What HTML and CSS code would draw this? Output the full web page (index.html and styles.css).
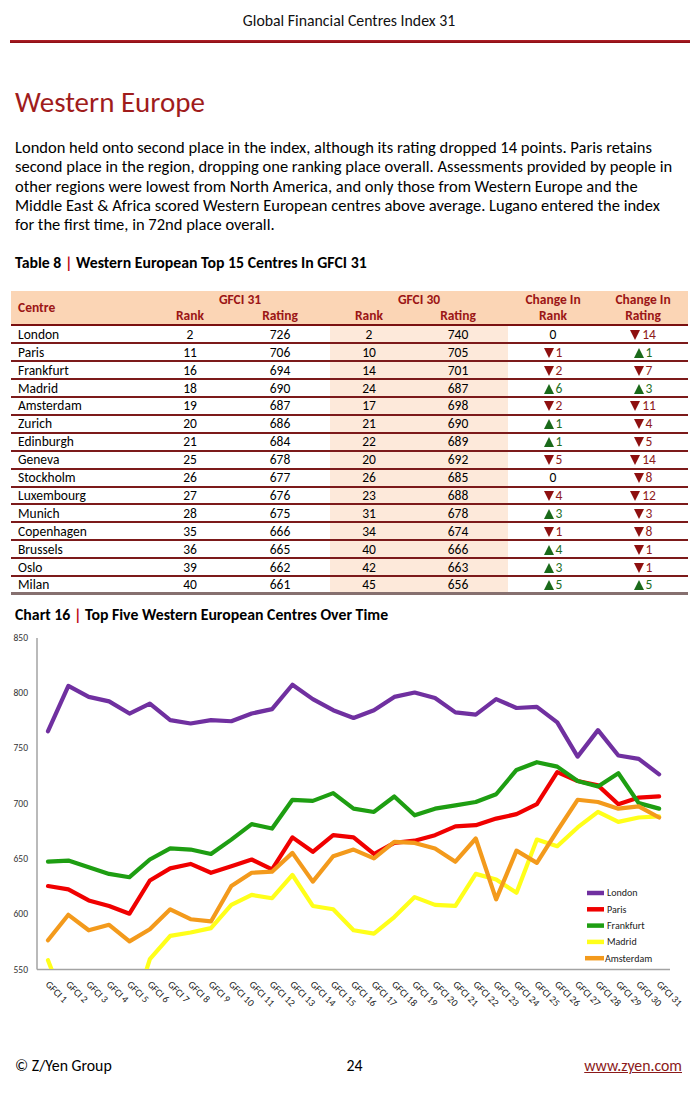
FILE: index.html
```html
<!DOCTYPE html>
<html lang="en">
<head>
<meta charset="utf-8">
<title>GFCI 31 – Western Europe</title>
<link rel="stylesheet" href="styles.css">
</head>
<body>
<div class="page">
  <header class="top">Global Financial Centres Index 31</header>
  <div class="rule"></div>

  <h1 class="title">Western Europe</h1>
  <p class="intro">London held onto second place in the index, although its rating dropped 14 points. Paris retains<br>second place in the region, dropping one ranking place overall. Assessments provided by people in<br>other regions were lowest from North America, and only those from Western Europe and the<br>Middle East &amp; Africa scored Western European centres above average. Lugano entered the index<br>for the first time, in 72nd place overall.</p>

  <h2 class="caption">Table 8 <span class="pipe">|</span> Western European Top 15 Centres In GFCI 31</h2>
  <table class="gfci">
    <colgroup>
      <col class="w-centre"><col class="w-rank"><col class="w-rating"><col class="w-rank30"><col class="w-rating"><col class="w-chg"><col class="w-chg">
    </colgroup>
    <thead>
      <tr class="h1">
        <th rowspan="2" class="left">Centre</th>
        <th colspan="2">GFCI 31</th>
        <th colspan="2">GFCI 30</th>
        <th>Change In</th>
        <th>Change In</th>
      </tr>
      <tr class="h2">
        <th>Rank</th><th>Rating</th><th>Rank</th><th>Rating</th><th>Rank</th><th>Rating</th>
      </tr>
    </thead>
    <tbody>
      <tr><td class="left">London</td><td>2</td><td>726</td><td class="prev">2</td><td class="prev">740</td><td>0</td><td><span class="dn">14</span></td></tr>
      <tr><td class="left">Paris</td><td>11</td><td>706</td><td class="prev">10</td><td class="prev">705</td><td><span class="dn">1</span></td><td><span class="up">1</span></td></tr>
      <tr><td class="left">Frankfurt</td><td>16</td><td>694</td><td class="prev">14</td><td class="prev">701</td><td><span class="dn">2</span></td><td><span class="dn">7</span></td></tr>
      <tr><td class="left">Madrid</td><td>18</td><td>690</td><td class="prev">24</td><td class="prev">687</td><td><span class="up">6</span></td><td><span class="up">3</span></td></tr>
      <tr><td class="left">Amsterdam</td><td>19</td><td>687</td><td class="prev">17</td><td class="prev">698</td><td><span class="dn">2</span></td><td><span class="dn">11</span></td></tr>
      <tr><td class="left">Zurich</td><td>20</td><td>686</td><td class="prev">21</td><td class="prev">690</td><td><span class="up">1</span></td><td><span class="dn">4</span></td></tr>
      <tr><td class="left">Edinburgh</td><td>21</td><td>684</td><td class="prev">22</td><td class="prev">689</td><td><span class="up">1</span></td><td><span class="dn">5</span></td></tr>
      <tr><td class="left">Geneva</td><td>25</td><td>678</td><td class="prev">20</td><td class="prev">692</td><td><span class="dn">5</span></td><td><span class="dn">14</span></td></tr>
      <tr><td class="left">Stockholm</td><td>26</td><td>677</td><td class="prev">26</td><td class="prev">685</td><td>0</td><td><span class="dn">8</span></td></tr>
      <tr><td class="left">Luxembourg</td><td>27</td><td>676</td><td class="prev">23</td><td class="prev">688</td><td><span class="dn">4</span></td><td><span class="dn">12</span></td></tr>
      <tr><td class="left">Munich</td><td>28</td><td>675</td><td class="prev">31</td><td class="prev">678</td><td><span class="up">3</span></td><td><span class="dn">3</span></td></tr>
      <tr><td class="left">Copenhagen</td><td>35</td><td>666</td><td class="prev">34</td><td class="prev">674</td><td><span class="dn">1</span></td><td><span class="dn">8</span></td></tr>
      <tr><td class="left">Brussels</td><td>36</td><td>665</td><td class="prev">40</td><td class="prev">666</td><td><span class="up">4</span></td><td><span class="dn">1</span></td></tr>
      <tr><td class="left">Oslo</td><td>39</td><td>662</td><td class="prev">42</td><td class="prev">663</td><td><span class="up">3</span></td><td><span class="dn">1</span></td></tr>
      <tr class="last"><td class="left">Milan</td><td>40</td><td>661</td><td class="prev">45</td><td class="prev">656</td><td><span class="up">5</span></td><td><span class="up">5</span></td></tr>
    </tbody>
  </table>

  <h2 class="caption chart-cap">Chart 16 <span class="pipe">|</span> Top Five Western European Centres Over Time</h2>
  <div class="chart">
    <svg class="chart-svg" width="690" height="390" viewBox="0 0 690 390" xmlns="http://www.w3.org/2000/svg">
      <defs>
        <clipPath id="plot"><rect x="37" y="0" width="640" height="342"/></clipPath>
      </defs>
      <g class="ylab" text-anchor="end">
        <text x="28" y="13.7">850</text>
        <text x="28" y="69">800</text>
        <text x="28" y="124.3">750</text>
        <text x="28" y="179.6">700</text>
        <text x="28" y="234.9">650</text>
        <text x="28" y="290.2">600</text>
        <text x="28" y="345.5">550</text>
      </g>
      <line x1="37" y1="11" x2="37" y2="342.5" class="axis"/>
      <line x1="37" y1="342.5" x2="670" y2="342.5" class="axis"/>
      <g clip-path="url(#plot)">
        <g transform="translate(48 342) scale(20.37 -1.106)" fill="none" stroke-width="4.2" stroke-linejoin="round" stroke-linecap="round">
          <polyline vector-effect="non-scaling-stroke" stroke="#7030a0" points="0,215 1,256 2,246 3,242 4,231 5,240 6,225 7,222 8,225 9,224 10,231 11,235 12,257 13,244 14,234 15,227 16,234 17,246 18,250 19,245 20,232 21,230 22,244 23,236 24,237 25,223 26,192 27,216 28,193 29,190 30,176"/>
          <polyline vector-effect="non-scaling-stroke" stroke="#f00000" points="0,75 1,72 2,62 3,57 4,50 5,80 6,91 7,95 8,87 9,93 10,99 11,90 12,119 13,106 14,121 15,119 16,104 17,114 18,116 19,121 20,129 21,130 22,136 23,140 24,149 25,178 26,170 27,166 28,149 29,155 30,156"/>
          <polyline vector-effect="non-scaling-stroke" stroke="#1e9e12" points="0,97 1,98 2,92 3,86 4,83 5,99 6,109 7,108 8,104 9,117 10,131 11,127 12,153 13,152 14,159 15,145 16,142 17,156 18,139 19,145 20,148 21,151 22,158 23,180 24,187 25,183 26,170 27,165 28,177 29,150 30,145"/>
          <polyline vector-effect="non-scaling-stroke" stroke="#ffff1a" points="0,8 1,-40 2,-45 3,-42 4,-50 5,9 6,30 7,33 8,37 9,58 10,67 11,64 12,85 13,57 14,54 15,35 16,32 17,47 18,65 19,58 20,57 21,86 22,81 23,69 24,117 25,111 26,128 27,142 28,133 29,137 30,138"/>
          <polyline vector-effect="non-scaling-stroke" stroke="#f39a1c" points="0,26 1,49 2,35 3,40 4,25 5,36 6,54 7,45 8,43 9,75 10,87 11,88 12,105 13,79 14,102 15,108 16,100 17,115 18,114 19,109 20,97 21,118 22,63 23,107 24,96 25,125 26,153 27,151 28,145 29,147 30,137"/>
        </g>
      </g>
      <g class="xlab">
        <text transform="translate(45 358) rotate(45)">GFCI 1</text>
        <text transform="translate(65.4 358) rotate(45)">GFCI 2</text>
        <text transform="translate(85.7 358) rotate(45)">GFCI 3</text>
        <text transform="translate(106.1 358) rotate(45)">GFCI 4</text>
        <text transform="translate(126.5 358) rotate(45)">GFCI 5</text>
        <text transform="translate(146.9 358) rotate(45)">GFCI 6</text>
        <text transform="translate(167.2 358) rotate(45)">GFCI 7</text>
        <text transform="translate(187.6 358) rotate(45)">GFCI 8</text>
        <text transform="translate(208 358) rotate(45)">GFCI 9</text>
        <text transform="translate(228.3 358) rotate(45)">GFCI 10</text>
        <text transform="translate(248.7 358) rotate(45)">GFCI 11</text>
        <text transform="translate(269.1 358) rotate(45)">GFCI 12</text>
        <text transform="translate(289.4 358) rotate(45)">GFCI 13</text>
        <text transform="translate(309.8 358) rotate(45)">GFCI 14</text>
        <text transform="translate(330.2 358) rotate(45)">GFCI 15</text>
        <text transform="translate(350.6 358) rotate(45)">GFCI 16</text>
        <text transform="translate(370.9 358) rotate(45)">GFCI 17</text>
        <text transform="translate(391.3 358) rotate(45)">GFCI 18</text>
        <text transform="translate(411.7 358) rotate(45)">GFCI 19</text>
        <text transform="translate(432 358) rotate(45)">GFCI 20</text>
        <text transform="translate(452.4 358) rotate(45)">GFCI 21</text>
        <text transform="translate(472.8 358) rotate(45)">GFCI 22</text>
        <text transform="translate(493.1 358) rotate(45)">GFCI 23</text>
        <text transform="translate(513.5 358) rotate(45)">GFCI 24</text>
        <text transform="translate(533.9 358) rotate(45)">GFCI 25</text>
        <text transform="translate(554.3 358) rotate(45)">GFCI 26</text>
        <text transform="translate(574.6 358) rotate(45)">GFCI 27</text>
        <text transform="translate(595 358) rotate(45)">GFCI 28</text>
        <text transform="translate(615.4 358) rotate(45)">GFCI 29</text>
        <text transform="translate(635.7 358) rotate(45)">GFCI 30</text>
        <text transform="translate(656.1 358) rotate(45)">GFCI 31</text>
      </g>
      <g class="legend">
        <line x1="587" y1="266" x2="604" y2="266" stroke="#7030a0"/>
        <text x="607" y="269.4">London</text>
        <line x1="587" y1="282.3" x2="604" y2="282.3" stroke="#f00000"/>
        <text x="607" y="285.7">Paris</text>
        <line x1="587" y1="298.6" x2="604" y2="298.6" stroke="#1e9e12"/>
        <text x="607" y="302">Frankfurt</text>
        <line x1="587" y1="314.9" x2="604" y2="314.9" stroke="#ffff1a"/>
        <text x="607" y="318.3">Madrid</text>
        <line x1="585" y1="331.2" x2="604" y2="331.2" stroke="#f39a1c"/>
        <text x="605" y="334.6">Amsterdam</text>
      </g>
    </svg>
  </div>

  <footer class="foot">
    <span class="foot-left">© Z/Yen Group</span>
    <span class="foot-mid">24</span>
    <a class="foot-right" href="#">www.zyen.com</a>
  </footer>
</div>
</body>
</html>
```

FILE: styles.css
```css
* { box-sizing: border-box; }

body {
  margin: 0;
  background: #ffffff;
  color: #000000;
  font-family: Carlito, Calibri, Lato, "Liberation Sans", sans-serif;
}

.page {
  width: 690px;
  height: 1093px;
  display: flex;
  flex-direction: column;
  overflow: hidden;
}

.top {
  height: 40px;
  display: flex;
  align-items: center;
  justify-content: center;
  padding-left: 8px;
  padding-top: 0;
  font-size: 15.8px;
  color: #111;
}

.rule {
  height: 3px;
  margin-left: 10px;
  background: linear-gradient(#b0222a, #8a0c12);
}

.title {
  margin: 42px 0 0 15px;
  font-weight: normal;
  font-size: 29px;
  line-height: 34px;
  color: #a01c1c;
}

.intro {
  margin: 19px 0 0 15px;
  font-size: 16.5px;
  line-height: 19.3px;
  white-space: nowrap;
}

.caption {
  margin: 20px 0 0 15px;
  font-size: 15.8px;
  line-height: 18px;
  font-weight: bold;
}

.pipe { color: #c0141c; }

.gfci {
  margin: 19px 0 0 11px;
  width: 677px;
  border-collapse: collapse;
  table-layout: fixed;
  font-size: 13.5px;
}

.w-centre { width: 139px; }
.w-rank { width: 80px; }
.w-rating { width: 100px; }
.w-rank30 { width: 78px; }
.w-chg { width: 90px; }

.gfci thead th {
  background: #fbd5b5;
  color: #9c1616;
  font-weight: bold;
  text-align: center;
  padding: 0;
  height: 16.5px;
  line-height: 16px;
}

.gfci thead .h1 th { padding-top: 1px; }
.gfci thead .h2 th { border-bottom: 2px solid #7a1010; }
.gfci thead th.left { border-bottom: 2px solid #7a1010; padding-left: 7px; text-align: left; }

.gfci tbody tr { height: 17.9px; }

.gfci td {
  padding: 1px 0 0;
  line-height: 14px;
  text-align: center;
  border-bottom: 2px solid #7c1a1a;
}

.gfci td.left { text-align: left; padding-left: 7px; }
.gfci td.prev { background: #fde9da; }
.gfci tr.last td { border-bottom: 3px solid #86706f; }

.dn, .up {
  display: inline-flex;
  align-items: center;
  gap: 2px;
  line-height: 14px;
  vertical-align: top;
}

.dn { color: #8e1a1a; }
.up { color: #1f6e1f; }

.dn::before, .up::before {
  content: "";
  width: 0;
  height: 0;
  border-left: 5px solid transparent;
  border-right: 5px solid transparent;
}

.dn::before { border-top: 10px solid #8e1010; }
.up::before { border-bottom: 10px solid #1a6a1a; }

.chart-cap { margin-top: 11px; }

.chart { margin-top: 3px; height: 390px; }
.chart-svg { display: block; }

.ylab text { font-size: 9.5px; fill: #333; }
.xlab text { font-size: 10px; fill: #222; }
.legend text { font-size: 10px; fill: #222; }
.legend line { stroke-width: 4.5; }
.axis { stroke: #a3a3a3; stroke-width: 1.5; }

.foot {
  margin-top: auto;
  padding: 0 8px 18px 15px;
  display: grid;
  grid-template-columns: 1fr auto 1fr;
  font-size: 15.8px;
  line-height: 18px;
}

.foot-mid { text-align: center; padding-left: 12px; }
.foot-right { justify-self: end; color: #8b1a1a; text-decoration: underline; }
```
